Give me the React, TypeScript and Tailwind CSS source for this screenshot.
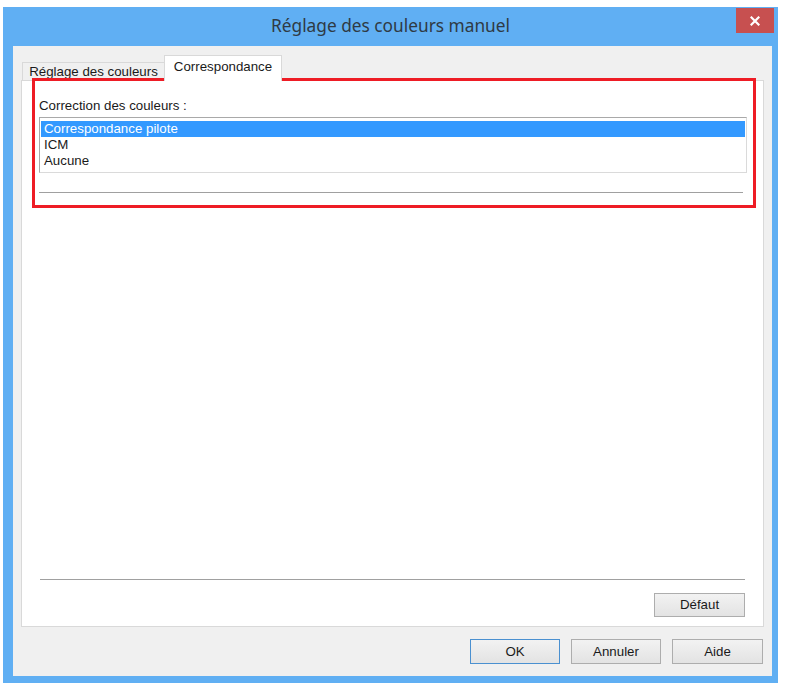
export default function App() {
  const options = ["Correspondance pilote", "ICM", "Aucune"];

  return (
    <div className="relative w-[785px] h-[684px] bg-white overflow-hidden font-['Liberation_Sans',Arial,sans-serif] text-[13.3px] text-[#1a1a1a]">
      {/* Window frame */}
      <div className="ml-[3px] mt-[7px] w-[775px] h-[676px] bg-[#60aff3] flex flex-col">
        {/* Title bar */}
        <div className="relative h-[39px] shrink-0 flex items-center justify-center">
          <span className="font-['Noto_Sans','Open_Sans',sans-serif] text-[17.3px] text-[#2f3a44] -mt-[1px]">
            Réglage des couleurs manuel
          </span>
          <div className="absolute right-[4px] top-[1px] w-[38px] h-[25px] bg-[#c75050] flex items-center justify-center">
            <svg width="10" height="10" viewBox="0 0 10 10">
              <path d="M1.5 1.5l7 7M8.5 1.5l-7 7" stroke="white" strokeWidth="2.2" strokeLinecap="square" />
            </svg>
          </div>
        </div>

        {/* Client area */}
        <div className="flex-1 pl-[10px] pr-[6px] pb-[7px] flex">
          <div className="flex-1 bg-[#f0f0f0] flex flex-col pt-[9px] pl-[8px] pr-[8px] pb-[12px]">
            {/* Tabs */}
            <div className="h-[25px] flex items-end pl-[1px] shrink-0">
              <div className="h-[18px] w-[142px] border-t border-l border-[#d9d9d9] bg-[#f0f0f0] flex items-center justify-center">
                Réglage des couleurs
              </div>
              <div className="relative z-10 -mb-px h-[26px] w-[118px] border-t border-l border-r border-[#d9d9d9] bg-white flex items-start justify-center pt-[1px]">
                Correspondance
              </div>
            </div>

            {/* Tab panel */}
            <div className="flex-1 bg-white border border-[#d9d9d9] flex flex-col pt-[17px] pl-[17px] pr-[16px] pb-[9px]">
              <div className="h-[16px] leading-[16px]">Correction des couleurs :</div>
              <div className="mt-[3px] h-[56px] border border-[#a9a9a9] border-b-[#dadada] border-r-[#dadada] pt-[3px] px-[1px]">
                {options.map((o, i) => (
                  <div
                    key={o}
                    className={
                      i === 0
                        ? "h-[16px] leading-[16px] pl-[3px] bg-[#3399ff] text-white"
                        : "h-[16px] leading-[16px] pl-[3px]"
                    }
                  >
                    {o}
                  </div>
                ))}
              </div>
              <div className="mt-[19px] mr-[4px] border-t border-[#a0a0a0] border-b border-b-white" />

              <div className="flex-1" />

              <div className="ml-[1px] mr-[2px] border-t border-[#a0a0a0] border-b border-b-white" />
              <div className="mt-[12px] flex justify-end pr-[2px]">
                <button className="w-[91px] h-[24px] border border-[#adadad] bg-gradient-to-b from-[#f2f2f2] to-[#e3e3e3]">
                  Défaut
                </button>
              </div>
            </div>

            {/* Dialog buttons */}
            <div className="mt-[12px] flex justify-end gap-[11px] pr-[1px] shrink-0">
              <button className="w-[90px] h-[25px] border border-[#4a90d0] bg-gradient-to-b from-[#f2f2f2] to-[#e3e3e3]">
                OK
              </button>
              <button className="w-[90px] h-[25px] border border-[#adadad] bg-gradient-to-b from-[#f2f2f2] to-[#e3e3e3]">
                Annuler
              </button>
              <button className="w-[91px] h-[25px] border border-[#adadad] bg-gradient-to-b from-[#f2f2f2] to-[#e3e3e3]">
                Aide
              </button>
            </div>
          </div>
        </div>
      </div>

      {/* Red highlight annotation */}
      <div className="absolute left-[32px] top-[78px] w-[724px] h-[130px] border-[3px] border-[#ee1c25] pointer-events-none" />
    </div>
  );
}
